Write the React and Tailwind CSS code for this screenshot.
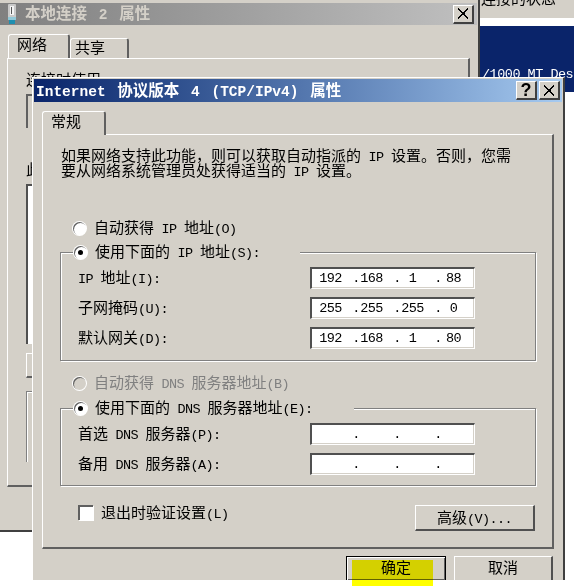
import React from "react";

// latin runs get their own font so they stay half the width of the CJK glyphs
const T = ({ children, latin = "font-['Liberation_Mono'] text-[13.5px] tracking-[-0.6px]" }) => (
  <>
    {children.split(/([\x00-\x7f]+)/).map((part, i) =>
      /^[\x00-\x7f]+$/.test(part) ? (
        <span key={i} className={`${latin} whitespace-pre leading-[0]`}>
          {part}
        </span>
      ) : (
        part
      )
    )}
  </>
);

const CloseGlyph = () => (
  <svg width="12" height="11" viewBox="0 0 12 11" shapeRendering="crispEdges">
    <path d="M1 0l4.5 4 1 0L11 0v2L7.5 5v1L11 9v2L6.5 7h-1L1 11V9l3.5-3V5L1 2z" fill="#000" />
  </svg>
);

const TitleButton = ({ children, className = "" }) => (
  <div
    className={`flex h-[19px] w-[21px] items-center justify-center border-t border-l border-t-white border-l-white border-r-2 border-b-2 border-r-[#404040] border-b-[#404040] bg-[#d4d0c8] ${className}`}
  >
    {children}
  </div>
);

const Tab = ({ label, className = "" }) => (
  <div
    className={`flex items-start rounded-t-[3px] border-t border-l border-t-white border-l-white border-r-2 border-r-[#606060] bg-[#d4d0c8] ${className}`}
  >
    {label}
  </div>
);

const Radio = ({ checked, disabled }) => (
  <div
    className={`flex h-[13px] w-[13px] shrink-0 items-center justify-center rounded-full shadow-[inset_1px_1px_0_#606060,0_0_0_1px_#ffffff] ${
      disabled ? "bg-[#d4d0c8]" : "bg-white"
    }`}
  >
    {checked && <div className="h-[5px] w-[5px] rounded-full bg-black" />}
  </div>
);

const Octet = ({ value, dot }) => (
  <>
    <span className="w-[23px] text-center">{value}</span>
    {dot && <span className="ml-[10px] w-[8px] text-center">.</span>}
  </>
);

const IpInput = ({ value = ["", "", "", ""] }) => (
  <div className="flex h-[22px] w-[165px] items-center border-t-2 border-l-2 border-t-[#505050] border-l-[#505050] border-r border-b border-r-white border-b-white bg-white pl-[7px] font-['Liberation_Mono'] text-[13.5px] tracking-[-0.6px] text-black shadow-[inset_-1px_-1px_0_#d4d0c8]">
    <Octet value={value[0]} dot />
    <Octet value={value[1]} dot />
    <Octet value={value[2]} dot />
    <Octet value={value[3]} />
  </div>
);

const Field = ({ label, value }) => (
  <div className="flex h-[22px] items-center justify-between pl-[17px] pr-[60px]">
    <span className="pb-[4px]">
      <T>{label}</T>
    </span>
    <IpInput value={value} />
  </div>
);

const GroupBox = ({ legend, legendWidth, height, children }) => (
  <div
    className={`relative ml-[17px] w-[476px] border border-[#808080] shadow-[inset_1px_1px_0_#ffffff,1px_1px_0_#ffffff] ${height}`}
  >
    <div className={`absolute -top-[9px] left-[12px] flex h-[16px] items-center gap-[8px] bg-[#d4d0c8] pl-[1px] ${legendWidth}`}>
      <Radio checked />
      <span className="pb-[4px]">
        <T>{legend}</T>
      </span>
    </div>
    {children}
  </div>
);

const AdapterIcon = () => (
  <svg width="10" height="20" viewBox="0 0 10 20">
    <rect x="1" y="0" width="8" height="14" rx="1" fill="#c8c8c8" />
    <rect x="3" y="2" width="4" height="9" fill="#f4f4f4" />
    <rect x="4" y="3" width="1" height="7" fill="#555" />
    <rect x="1" y="13" width="8" height="3" fill="#8fc8d8" />
    <rect x="2" y="16" width="6" height="4" fill="#1f8fb0" />
  </svg>
);

const BackWindow = () => (
  <div className="absolute left-0 top-0 h-[532px] w-[480px] border-r-2 border-b-2 border-r-[#404040] border-b-[#404040] bg-[#d4d0c8] pt-[3px]">
    <div className="flex h-[22px] w-[477px] items-center bg-gradient-to-r from-[#808080] to-[#c0c0c0] pl-[7px] pr-[3px] text-[15.5px] font-bold text-[#d4d0c8] [word-spacing:3px]">
      <AdapterIcon />
      <span className="ml-[8px] pb-[2px]">
        <T latin="font-['Liberation_Mono'] text-[14.5px]">本地连接 2 属性</T>
      </span>
      <TitleButton className="ml-auto">
        <CloseGlyph />
      </TitleButton>
    </div>

    <div className="ml-[8px] mt-[9px] flex items-end">
      <Tab label="网络" className="h-[24px] w-[62px] pl-[8px] pt-[1px]" />
      <Tab label="共享" className="h-[20px] w-[59px] pl-[4px]" />
    </div>

    <div className="ml-[7px] h-[429px] w-[463px] border-t border-l border-t-white border-l-white border-r-2 border-b-2 border-r-[#606060] border-b-[#606060] pl-[18px]">
      <div className="mt-[12px] h-[23px]">连接时使用:</div>
      <div className="h-[34px] w-[420px] border-t-2 border-l-2 border-[#606060]" />
      <div className="mt-[33px] h-[23px]">此连接使用下列项目:</div>
      <div className="h-[160px] w-[420px] border-t-2 border-l-2 border-[#505050] bg-white" />
      <div className="mt-[9px] h-[25px] w-[80px] border-t border-l border-t-white border-l-white border-b-2 border-b-[#606060]" />
      <div className="mt-[13px] h-[71px] w-[420px] border-t border-l border-[#808080] shadow-[inset_1px_1px_0_#ffffff]" />
    </div>
  </div>
);

const SideWindow = () => (
  <div className="absolute left-[480px] top-0 flex h-[586px] w-[94px] flex-col overflow-hidden bg-white">
    <div className="h-[18px] shrink-0 overflow-hidden bg-[#d4d0c8] pl-[1px]">
      <div className="-mt-[10px] whitespace-nowrap">连接的状态</div>
    </div>
    <div className="h-[8px] shrink-0 bg-white" />
    <div className="flex h-[66px] shrink-0 items-end bg-[#0a246a] pb-[11px] pl-[2px] font-['Liberation_Mono'] text-[13.5px] tracking-[-0.5px] text-white">
      <span className="whitespace-pre">/1000 MT Desktop</span>
    </div>
  </div>
);

const FrontWindow = () => (
  <div className="absolute left-[32px] top-[77px] h-[503px] w-[533px] overflow-hidden border-t border-l border-t-white border-l-white border-r-2 border-r-[#404040] bg-[#d4d0c8] pt-[1px] pl-[1px] pr-[1px]">
    <div className="flex h-[23px] items-center bg-gradient-to-r from-[#0a246a] to-[#a6caf0] pl-[2px] pr-[2px] text-[15.5px] font-bold text-white [word-spacing:3px]">
      <span className="whitespace-nowrap pb-[2px]">
        <T latin="font-['Liberation_Mono'] text-[14.5px]">Internet 协议版本 4 (TCP/IPv4) 属性</T>
      </span>
      <TitleButton className="ml-auto">
        <span className="font-['Liberation_Sans'] text-[18px] font-bold leading-none text-black">?</span>
      </TitleButton>
      <TitleButton className="ml-[2px]">
        <CloseGlyph />
      </TitleButton>
    </div>

    <div className="px-[8px] pt-[9px]">
      <Tab label="常规" className="relative z-10 -mb-px h-[24px] w-[64px] pl-[8px] pt-[1px]" />

      <div className="h-[415px] border-t border-l border-t-white border-l-white border-r-2 border-b-2 border-r-[#606060] border-b-[#606060]">
        <p className="ml-[18px] mt-[12px] w-[470px] leading-[15px]">
          <T>{"如果网络支持此功能\uFF0C则可以获取自动指派的 IP 设置。否则\uFF0C您需"}</T>
          <br />
          <T>要从网络系统管理员处获得适当的 IP 设置。</T>
        </p>

        <div className="ml-[30px] mt-[43px] flex h-[16px] items-center gap-[8px]">
          <Radio />
          <span className="pb-[4px]">
            <T>自动获得 IP 地址(O)</T>
          </span>
        </div>

        <div className="mt-[16px]">
          <GroupBox legend="使用下面的 IP 地址(S):" legendWidth="w-[227px]" height="h-[109px]">
            <div className="flex flex-col gap-[8px] pt-[14px]">
              <Field label="IP 地址(I):" value={["192", "168", "1", "88"]} />
              <Field label="子网掩码(U):" value={["255", "255", "255", "0"]} />
              <Field label="默认网关(D):" value={["192", "168", "1", "80"]} />
            </div>
          </GroupBox>
        </div>

        <div className="ml-[30px] mt-[14px] flex h-[16px] items-center gap-[8px] text-[#808080]">
          <Radio disabled />
          <span className="pb-[4px]">
            <T>自动获得 DNS 服务器地址(B)</T>
          </span>
        </div>

        <div className="mt-[17px]">
          <GroupBox legend="使用下面的 DNS 服务器地址(E):" legendWidth="w-[281px]" height="h-[78px]">
            <div className="flex flex-col gap-[8px] pt-[14px]">
              <Field label="首选 DNS 服务器(P):" />
              <Field label="备用 DNS 服务器(A):" />
            </div>
          </GroupBox>
        </div>

        <div className="ml-[35px] mr-[17px] mt-[19px] flex h-[26px] items-start">
          <div className="h-[15px] w-[15px] border-t-2 border-l-2 border-t-[#606060] border-l-[#606060] bg-white shadow-[1px_1px_0_#ffffff]" />
          <span className="-mt-[1px] ml-[8px]">
            <T>退出时验证设置(L)</T>
          </span>
          <button className="ml-auto flex h-[26px] w-[120px] items-center justify-center border-t border-l border-t-white border-l-white border-r-2 border-b-2 border-r-[#505050] border-b-[#505050]">
            <span className="pb-[3px]">
              <T>高级(V)...</T>
            </span>
          </button>
        </div>
      </div>

      <div className="mt-[7px] flex justify-end gap-[8px] pr-[1px]">
        <button className="h-[24px] w-[100px] border-t border-l border-r border-black pb-[4px] shadow-[inset_1px_1px_0_#ffffff,inset_-1px_-1px_0_#606060]">
          确定
        </button>
        <button className="h-[24px] w-[99px] border-t border-l border-r-2 border-t-white border-l-white border-r-[#505050] pb-[4px]">
          取消
        </button>
      </div>
    </div>
  </div>
);

export default function App() {
  return (
    <div className="relative h-[586px] w-[574px] overflow-hidden bg-white font-['Noto_Sans_CJK_SC',sans-serif] text-[15px] leading-none text-black">
      <BackWindow />
      <SideWindow />
      <FrontWindow />
      {/* yellow marker over the OK button */}
      <div className="absolute left-[352px] top-[560px] h-[26px] w-[81px] bg-[#ffff00] mix-blend-multiply" />
    </div>
  );
}
